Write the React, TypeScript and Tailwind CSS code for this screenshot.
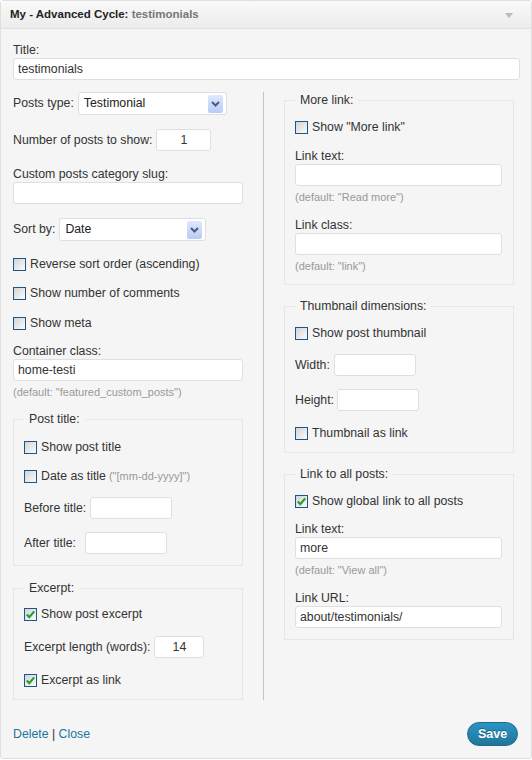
import { ReactNode } from "react"

const Check = ({ checked = false, label, hint }: { checked?: boolean; label: string; hint?: string }) => (
    <div className="flex h-[16px] items-center">
        <span className="flex h-[13px] w-[13px] shrink-0 items-center justify-center border border-[#1f5585] bg-linear-to-br from-[#d4d4d4] to-[#fbfbfb]">
            {checked && (
                <svg width="11" height="11" viewBox="0 0 11 11">
                    <path d="M1.8 5.6 L4.3 8.2 L9.2 2.4" fill="none" stroke="#23a12b" strokeWidth="2.2" />
                </svg>
            )}
        </span>
        <span className="ml-[4px]">{label}</span>
        {hint && <span className="ml-[3px] text-[11px] text-[#999]">{hint}</span>}
    </div>
)

const Input = ({ value = "", w, center = false }: { value?: string; w: string; center?: boolean }) => (
    <input
        readOnly
        value={value}
        className={`${w} h-[22px] shrink-0 rounded-[3px] border border-[#dfdfdf] bg-white px-[4px] text-[#333] outline-none ${center ? "text-center" : ""}`}
    />
)

const Select = ({ value, w }: { value: string; w: string }) => (
    <div className={`${w} flex h-[23px] items-center justify-between rounded-[3px] border border-[#dfdfdf] bg-white pl-[5px] pr-[3px]`}>
        <span className="text-[#222]">{value}</span>
        <span className="flex h-[18px] w-[15px] items-center justify-center rounded-[2px] bg-linear-to-b from-[#dfe8fd] to-[#b9ccf7]">
            <svg width="9" height="6" viewBox="0 0 9 6">
                <polyline points="1,1 4.5,4.5 8,1" fill="none" stroke="#4a5d80" strokeWidth="2" />
            </svg>
        </span>
    </div>
)

const Label = ({ children, mt }: { children: ReactNode; mt: string }) => (
    <div className={`${mt} leading-[15px]`}>{children}</div>
)

const Hint = ({ children }: { children: ReactNode }) => (
    <div className="mt-[5px] text-[11px] leading-[13px] text-[#999]">{children}</div>
)

const Box = ({ title, mt, pt, children }: { title: string; mt: string; pt: string; children: ReactNode }) => (
    <fieldset className={`${mt} w-[230px] border border-[#e6e6e6] px-[10px] pb-[11px]`}>
        <legend className="px-[5px] leading-[16px]">{title}</legend>
        <div className={pt}>{children}</div>
    </fieldset>
)

export default function App() {
    return (
        <div className="h-[760px] w-[532px] bg-white font-['Liberation_Sans',Arial,sans-serif] text-[12.3px] text-[#333]">
            <div className="flex h-[759px] w-[532px] flex-col rounded-[3px] border border-[#dfdfdf] bg-[#f5f5f5]">
                {/* HEADER */}
                <div className="flex h-[28px] items-center justify-between border-b border-[#dfdfdf] bg-linear-to-b from-[#f9f9f9] to-[#ececec] pl-[9px] pr-[18px] pt-[1px]">
                    <div className="text-[11.5px] font-bold text-[#222]">
                        My - Advanced Cycle: <span className="text-[#777]">testimonials</span>
                    </div>
                    <svg width="8" height="5" viewBox="0 0 8 5">
                        <polygon points="0,0 8,0 4,5" fill="#bbb" />
                    </svg>
                </div>

                {/* BODY */}
                <div className="flex flex-1 flex-col pl-[12px] pr-[11px] pt-[14px]">
                    <Label mt="mt-0">Title:</Label>
                    <Input value="testimonials" w="w-full" />

                    <div className="mt-[12px] flex pb-[12px]">
                        {/* LEFT COLUMN */}
                        <div className="w-[230px]">
                            <div className="flex h-[23px] items-center gap-[4px]">
                                <span>Posts type:</span>
                                <Select value="Testimonial" w="w-[149px]" />
                            </div>
                            <div className="mt-[14px] flex h-[22px] items-center gap-[4px]">
                                <span>Number of posts to show:</span>
                                <Input value="1" w="w-[55px]" center />
                            </div>
                            <Label mt="mt-[16px]">Custom posts category slug:</Label>
                            <Input w="w-[230px]" />
                            <div className="mt-[14px] flex h-[23px] items-center gap-[4px]">
                                <span>Sort by:</span>
                                <Select value="Date" w="w-[147px]" />
                            </div>
                            <div className="mt-[15px]">
                                <Check label="Reverse sort order (ascending)" />
                            </div>
                            <div className="mt-[13px]">
                                <Check label="Show number of comments" />
                            </div>
                            <div className="mt-[14px]">
                                <Check label="Show meta" />
                            </div>
                            <Label mt="mt-[13px]">Container class:</Label>
                            <Input value="home-testi" w="w-[230px]" />
                            <Hint>(default: "featured_custom_posts")</Hint>

                            <Box title="Post title:" mt="mt-[12px]" pt="pt-[12px]">
                                <Check label="Show post title" />
                                <div className="mt-[13px]">
                                    <Check label="Date as title" hint={'("[mm-dd-yyyy]")'} />
                                </div>
                                <div className="mt-[13px] flex h-[22px] items-center gap-[4px]">
                                    <span>Before title:</span>
                                    <Input w="w-[82px]" />
                                </div>
                                <div className="mt-[13px] flex h-[22px] items-center gap-[9px]">
                                    <span>After title:</span>
                                    <Input w="w-[82px]" />
                                </div>
                            </Box>

                            <Box title="Excerpt:" mt="mt-[14px]" pt="pt-[10px]">
                                <Check checked label="Show post excerpt" />
                                <div className="mt-[14px] flex h-[22px] items-center gap-[4px]">
                                    <span>Excerpt length (words):</span>
                                    <Input value="14" w="w-[50px]" center />
                                </div>
                                <div className="mt-[14px]">
                                    <Check checked label="Excerpt as link" />
                                </div>
                            </Box>
                        </div>

                        {/* RIGHT COLUMN */}
                        <div className="ml-[20px] border-l border-[#c4c4c4] pl-[20px]">
                            <Box title="More link:" mt="mt-0" pt="pt-[11px]">
                                <Check label={'Show "More link"'} />
                                <Label mt="mt-[14px]">Link text:</Label>
                                <Input w="w-[207px]" />
                                <Hint>(default: "Read more")</Hint>
                                <Label mt="mt-[14px]">Link class:</Label>
                                <Input w="w-[207px]" />
                                <Hint>(default: "link")</Hint>
                            </Box>

                            <Box title="Thumbnail dimensions:" mt="mt-[13px]" pt="pt-[11px]">
                                <Check label="Show post thumbnail" />
                                <div className="mt-[13px] flex h-[22px] items-center gap-[4px]">
                                    <span>Width:</span>
                                    <Input w="w-[82px]" />
                                </div>
                                <div className="mt-[13px] flex h-[22px] items-center gap-[3px]">
                                    <span>Height:</span>
                                    <Input w="w-[82px]" />
                                </div>
                                <div className="mt-[14px]">
                                    <Check label="Thumbnail as link" />
                                </div>
                            </Box>

                            <Box title="Link to all posts:" mt="mt-[13px]" pt="pt-[11px]">
                                <Check checked label="Show global link to all posts" />
                                <Label mt="mt-[13px]">Link text:</Label>
                                <Input value="more" w="w-[207px]" />
                                <Hint>(default: "View all")</Hint>
                                <Label mt="mt-[14px]">Link URL:</Label>
                                <Input value="about/testimonials/" w="w-[207px]" />
                            </Box>
                        </div>
                    </div>

                    {/* FOOTER */}
                    <div className="mt-[10px] flex h-[24px] items-center justify-between pr-[2px]">
                        <div className="text-[#21759b]">
                            <a href="#" className="text-[#21759b]">Delete</a>
                            <span className="text-[#333]"> | </span>
                            <a href="#" className="text-[#21759b]">Close</a>
                        </div>
                        <button className="h-[24px] w-[51px] rounded-full border border-[#1e6a8d] bg-linear-to-b from-[#2a95c5] to-[#21759b] text-[12.5px] font-bold text-white [text-shadow:0_-1px_0_rgba(0,0,0,0.3)]">
                            Save
                        </button>
                    </div>
                </div>
            </div>
        </div>
    )
}
